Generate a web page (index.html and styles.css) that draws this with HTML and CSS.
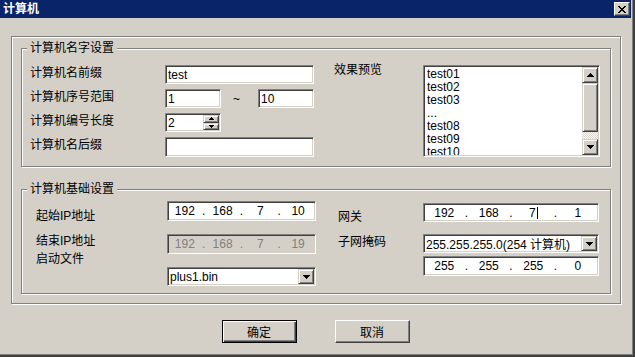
FILE: index.html
```html
<!DOCTYPE html>
<html lang="zh-CN">
<head>
    <meta charset="UTF-8">
    <meta name="viewport" content="width=device-width, initial-scale=1.0">
    <title>计算机</title>
    <link rel="stylesheet" href="styles.css">
</head>
<body>
<div class="window">
    <div class="titlebar">
        <span class="title">计算机</span>
        <span class="close">
            <svg width="8" height="7" viewBox="0 0 8 7"><path d="M0 0h2v1H0zM6 0h2v1H6zM1 1h2v1H1zM5 1h2v1H5zM2 2h4v1H2zM3 3h2v1H3zM2 4h4v1H2zM1 5h2v1H1zM5 5h2v1H5zM0 6h2v1H0zM6 6h2v1H6z" fill="#000"/></svg>
        </span>
    </div>

    <div class="content">
        <div class="frame">
            <fieldset class="group group-name">
                <legend>计算机名字设置</legend>
                <div class="name-grid">
                    <span class="lbl">计算机名前缀</span>
                    <div class="field ctl">test</div>

                    <span class="lbl">计算机序号范围</span>
                    <div class="range ctl">
                        <div class="field short">1</div>
                        <span class="tilde">~</span>
                        <div class="field short">10</div>
                    </div>

                    <span class="lbl">计算机编号长度</span>
                    <div class="ctl">
                        <div class="field spin">
                            <span class="val">2</span>
                            <div class="updown">
                                <span class="raised ud"><svg width="5" height="3" viewBox="0 0 5 3"><path d="M2 0h1v1h1v1h1v1H0V2h1V1h1z"/></svg></span>
                                <span class="raised ud"><svg width="5" height="3" viewBox="0 0 5 3"><path d="M0 0h5v1H4v1H3v1H2V2H1V1H0z"/></svg></span>
                            </div>
                        </div>
                    </div>

                    <span class="lbl">计算机名后缀</span>
                    <div class="field ctl last"></div>

                    <span class="lbl preview-lbl">效果预览</span>
                    <div class="listbox">
                        <ul class="items">
                            <li>test01</li>
                            <li>test02</li>
                            <li>test03</li>
                            <li>...</li>
                            <li>test08</li>
                            <li>test09</li>
                            <li>test10</li>
                        </ul>
                        <div class="scrollbar">
                            <span class="raised sb-btn"><svg width="7" height="4" viewBox="0 0 7 4"><path d="M3 0h1v1h1v1h1v1h1v1H0V3h1V2h1V1h1z"/></svg></span>
                            <span class="raised thumb"></span>
                            <span class="track"></span>
                            <span class="raised sb-btn"><svg width="7" height="4" viewBox="0 0 7 4"><path d="M0 0h7v1H6v1H5v1H4v1H3V3H2V2H1V1H0z"/></svg></span>
                        </div>
                    </div>
                </div>
            </fieldset>

            <fieldset class="group group-base">
                <legend>计算机基础设置</legend>
                <div class="base-cols">
                    <div class="col col-left">
                        <div class="row row-1">
                            <span class="lbl">起始IP地址</span>
                            <div class="field ip">
                                <span class="seg">192</span><span class="dot">.</span><span class="seg">168</span><span class="dot">.</span><span class="seg">7</span><span class="dot">.</span><span class="seg">10</span>
                            </div>
                        </div>
                        <div class="row row-2">
                            <span class="lbl">结束IP地址</span>
                            <div class="field ip disabled">
                                <span class="seg">192</span><span class="dot">.</span><span class="seg">168</span><span class="dot">.</span><span class="seg">7</span><span class="dot">.</span><span class="seg">19</span>
                            </div>
                        </div>
                        <div class="row row-3">
                            <span class="lbl">启动文件</span>
                            <div class="field combo">
                                <span class="val">plus1.bin</span>
                                <span class="raised drop"><svg width="7" height="4" viewBox="0 0 7 4"><path d="M0 0h7v1H6v1H5v1H4v1H3V3H2V2H1V1H0z"/></svg></span>
                            </div>
                        </div>
                    </div>

                    <div class="col col-right">
                        <div class="row row-1">
                            <span class="lbl">网关</span>
                            <div class="field ip">
                                <span class="seg">192</span><span class="dot">.</span><span class="seg">168</span><span class="dot">.</span><span class="seg">7<i class="caret"></i></span><span class="dot">.</span><span class="seg">1</span>
                            </div>
                        </div>
                        <div class="row row-2">
                            <span class="lbl">子网掩码</span>
                            <div class="field combo">
                                <span class="val">255.255.255.0(254 计算机)</span>
                                <span class="raised drop"><svg width="7" height="4" viewBox="0 0 7 4"><path d="M0 0h7v1H6v1H5v1H4v1H3V3H2V2H1V1H0z"/></svg></span>
                            </div>
                        </div>
                        <div class="row row-3">
                            <span class="lbl"></span>
                            <div class="field ip">
                                <span class="seg">255</span><span class="dot">.</span><span class="seg">255</span><span class="dot">.</span><span class="seg">255</span><span class="dot">.</span><span class="seg">0</span>
                            </div>
                        </div>
                    </div>
                </div>
            </fieldset>
        </div>

        <div class="actions">
            <button type="button" class="btn default">确定</button>
            <button type="button" class="btn">取消</button>
        </div>
    </div>
</div>
</body>
</html>
```

FILE: styles.css
```css
* {
    box-sizing: border-box;
}
body {
    margin: 0;
    font-family: "Liberation Sans", "Noto Sans CJK SC", sans-serif;
    font-size: 12px;
    color: #000;
    background: #d4d0c8;
}
.window {
    width: 635px;
    height: 357px;
    background: #d4d0c8;
    border-right: 2px solid #404040;
    border-bottom: 2px solid #404040;
    box-shadow: inset -1px -1px #808080;
    padding-right: 2px;
    display: flex;
    flex-direction: column;
}

/* title bar */
.titlebar {
    height: 18px;
    background: #0a246a;
    color: #fff;
    display: flex;
    align-items: center;
    justify-content: space-between;
    padding: 0 1px 0 3px;
}
.title {
    font-weight: bold;
    line-height: 14px;
}
.close {
    width: 16px;
    height: 14px;
    background: #d4d0c8;
    border: 1px solid;
    border-color: #fff #404040 #404040 #fff;
    box-shadow: inset -1px -1px #808080;
    display: flex;
    align-items: center;
    justify-content: center;
}

/* 3d helpers */
.raised {
    background: #d4d0c8;
    border: 1px solid;
    border-color: #d4d0c8 #404040 #404040 #d4d0c8;
    box-shadow: inset 1px 1px #fff, inset -1px -1px #808080;
    display: flex;
    align-items: center;
    justify-content: center;
}
.field {
    background: #fff;
    border: 1px solid;
    border-color: #808080 #fff #fff #808080;
    box-shadow: inset 1px 1px #404040, inset -1px -1px #d4d0c8;
    padding: 0 2px;
    display: flex;
    align-items: center;
    white-space: nowrap;
    overflow: hidden;
}

/* frames */
.frame {
    margin: 18px 0 0 11px;
    width: 610px;
    height: 268px;
    border: 1px solid #808080;
    box-shadow: inset 1px 1px #fff, 1px 1px #fff;
    padding: 4px 9px 0;
}
.group {
    margin: 0;
    min-width: 0;
    border: 1px solid #808080;
    box-shadow: inset 1px 1px #fff, 1px 1px #fff;
}
.group legend {
    padding: 0 3px;
    margin-left: -3px;
    line-height: 15px;
    background: #d4d0c8;
}
.group-name {
    padding: 9px 9px 9px 8px;
}
.group-base {
    margin-top: 15px;
    padding: 4px 9px 7px 8px;
}
.lbl {
    line-height: 14px;
    white-space: nowrap;
}

/* name settings */
.name-grid {
    display: grid;
    grid-template-columns: 135px 149px 20px 89px 177px;
    grid-template-rows: 19px 19px 19px 20px;
    row-gap: 5px;
}
.name-grid .lbl {
    grid-column: 1;
    align-self: start;
    margin-top: 1px;
}
.name-grid .ctl {
    grid-column: 2;
}
.name-grid .preview-lbl {
    grid-column: 4;
    grid-row: 1;
    margin-top: -2px;
}
.range {
    display: flex;
    align-items: center;
    justify-content: space-between;
}
.field.short {
    width: 56px;
    height: 19px;
}
.tilde {
    margin-right: 6px;
}
.spin {
    width: 56px;
    height: 19px;
    padding-right: 0;
}
.spin .val {
    flex: 1;
}
.updown {
    width: 16px;
    height: 15px;
    margin-right: 1px;
    display: flex;
    flex-direction: column;
}
.ud {
    flex: 1;
}
.listbox {
    grid-column: 5;
    grid-row: 1 / 5;
    background: #fff;
    border: 1px solid;
    border-color: #808080 #fff #fff #808080;
    box-shadow: inset 1px 1px #404040, inset -1px -1px #d4d0c8;
    padding: 1px;
    display: flex;
    overflow: hidden;
}
.items {
    flex: 1;
    list-style: none;
    margin: 0;
    padding: 1px 2px 0;
    line-height: 13px;
    overflow: hidden;
}
.scrollbar {
    width: 16px;
    display: flex;
    flex-direction: column;
}
.sb-btn {
    height: 16px;
}
.thumb {
    height: 49px;
}
.track {
    flex: 1;
    background: repeating-conic-gradient(#fff 0 25%, #d4d0c8 0 50%) 0 0 / 2px 2px;
}

/* base settings */
.base-cols {
    display: flex;
    gap: 22px;
    margin-left: 6px;
}
.row {
    display: flex;
    align-items: flex-start;
}
.col-left .lbl {
    width: 131px;
}
.col-left .field {
    width: 149px;
}
.col-right .lbl {
    width: 85px;
}
.col-right .field {
    width: 176px;
}
.col-left .row-1 { height: 20px; }
.col-left .row-1 .lbl { margin-top: 8px; }
.col-left .row-2 { height: 20px; margin-top: 13px; }
.col-left .row-3 { height: 19px; margin-top: 13px; }
.col-left .row-3 .lbl { margin-top: -15px; }
.col-right .row-1 { height: 19px; margin-top: 2px; }
.col-right .row-1 .lbl { margin-top: 7px; }
.col-right .row-2 { height: 19px; margin-top: 12px; }
.col-right .row-2 .lbl { margin-top: 1px; }
.col-right .row-3 { height: 20px; margin-top: 3px; }
.row .field {
    height: 100%;
}
.ip {
    padding: 0;
}
.ip .seg {
    flex: 1;
    text-align: center;
}
.ip .dot {
    width: 4px;
    text-align: center;
}
.ip.disabled {
    background: #d4d0c8;
    color: #808080;
}
.caret {
    display: inline-block;
    width: 1px;
    height: 12px;
    background: #000;
    vertical-align: -2px;
    margin-left: 1px;
}
.combo {
    padding-right: 0;
}
.combo .val {
    flex: 1;
}
.drop {
    width: 16px;
    height: calc(100% - 2px);
    margin-right: 1px;
}

/* buttons */
.actions {
    display: flex;
    justify-content: center;
    gap: 38px;
    margin-top: 16px;
}
.btn {
    width: 75px;
    height: 23px;
    padding: 0;
    font: inherit;
    color: #000;
    background: #d4d0c8;
    border: 1px solid;
    border-color: #fff #404040 #404040 #fff;
    box-shadow: inset -1px -1px #808080;
}
.btn.default {
    border-color: #000;
    box-shadow: inset 1px 1px #fff, inset -1px -1px #404040, inset -2px -2px #808080;
}
```
